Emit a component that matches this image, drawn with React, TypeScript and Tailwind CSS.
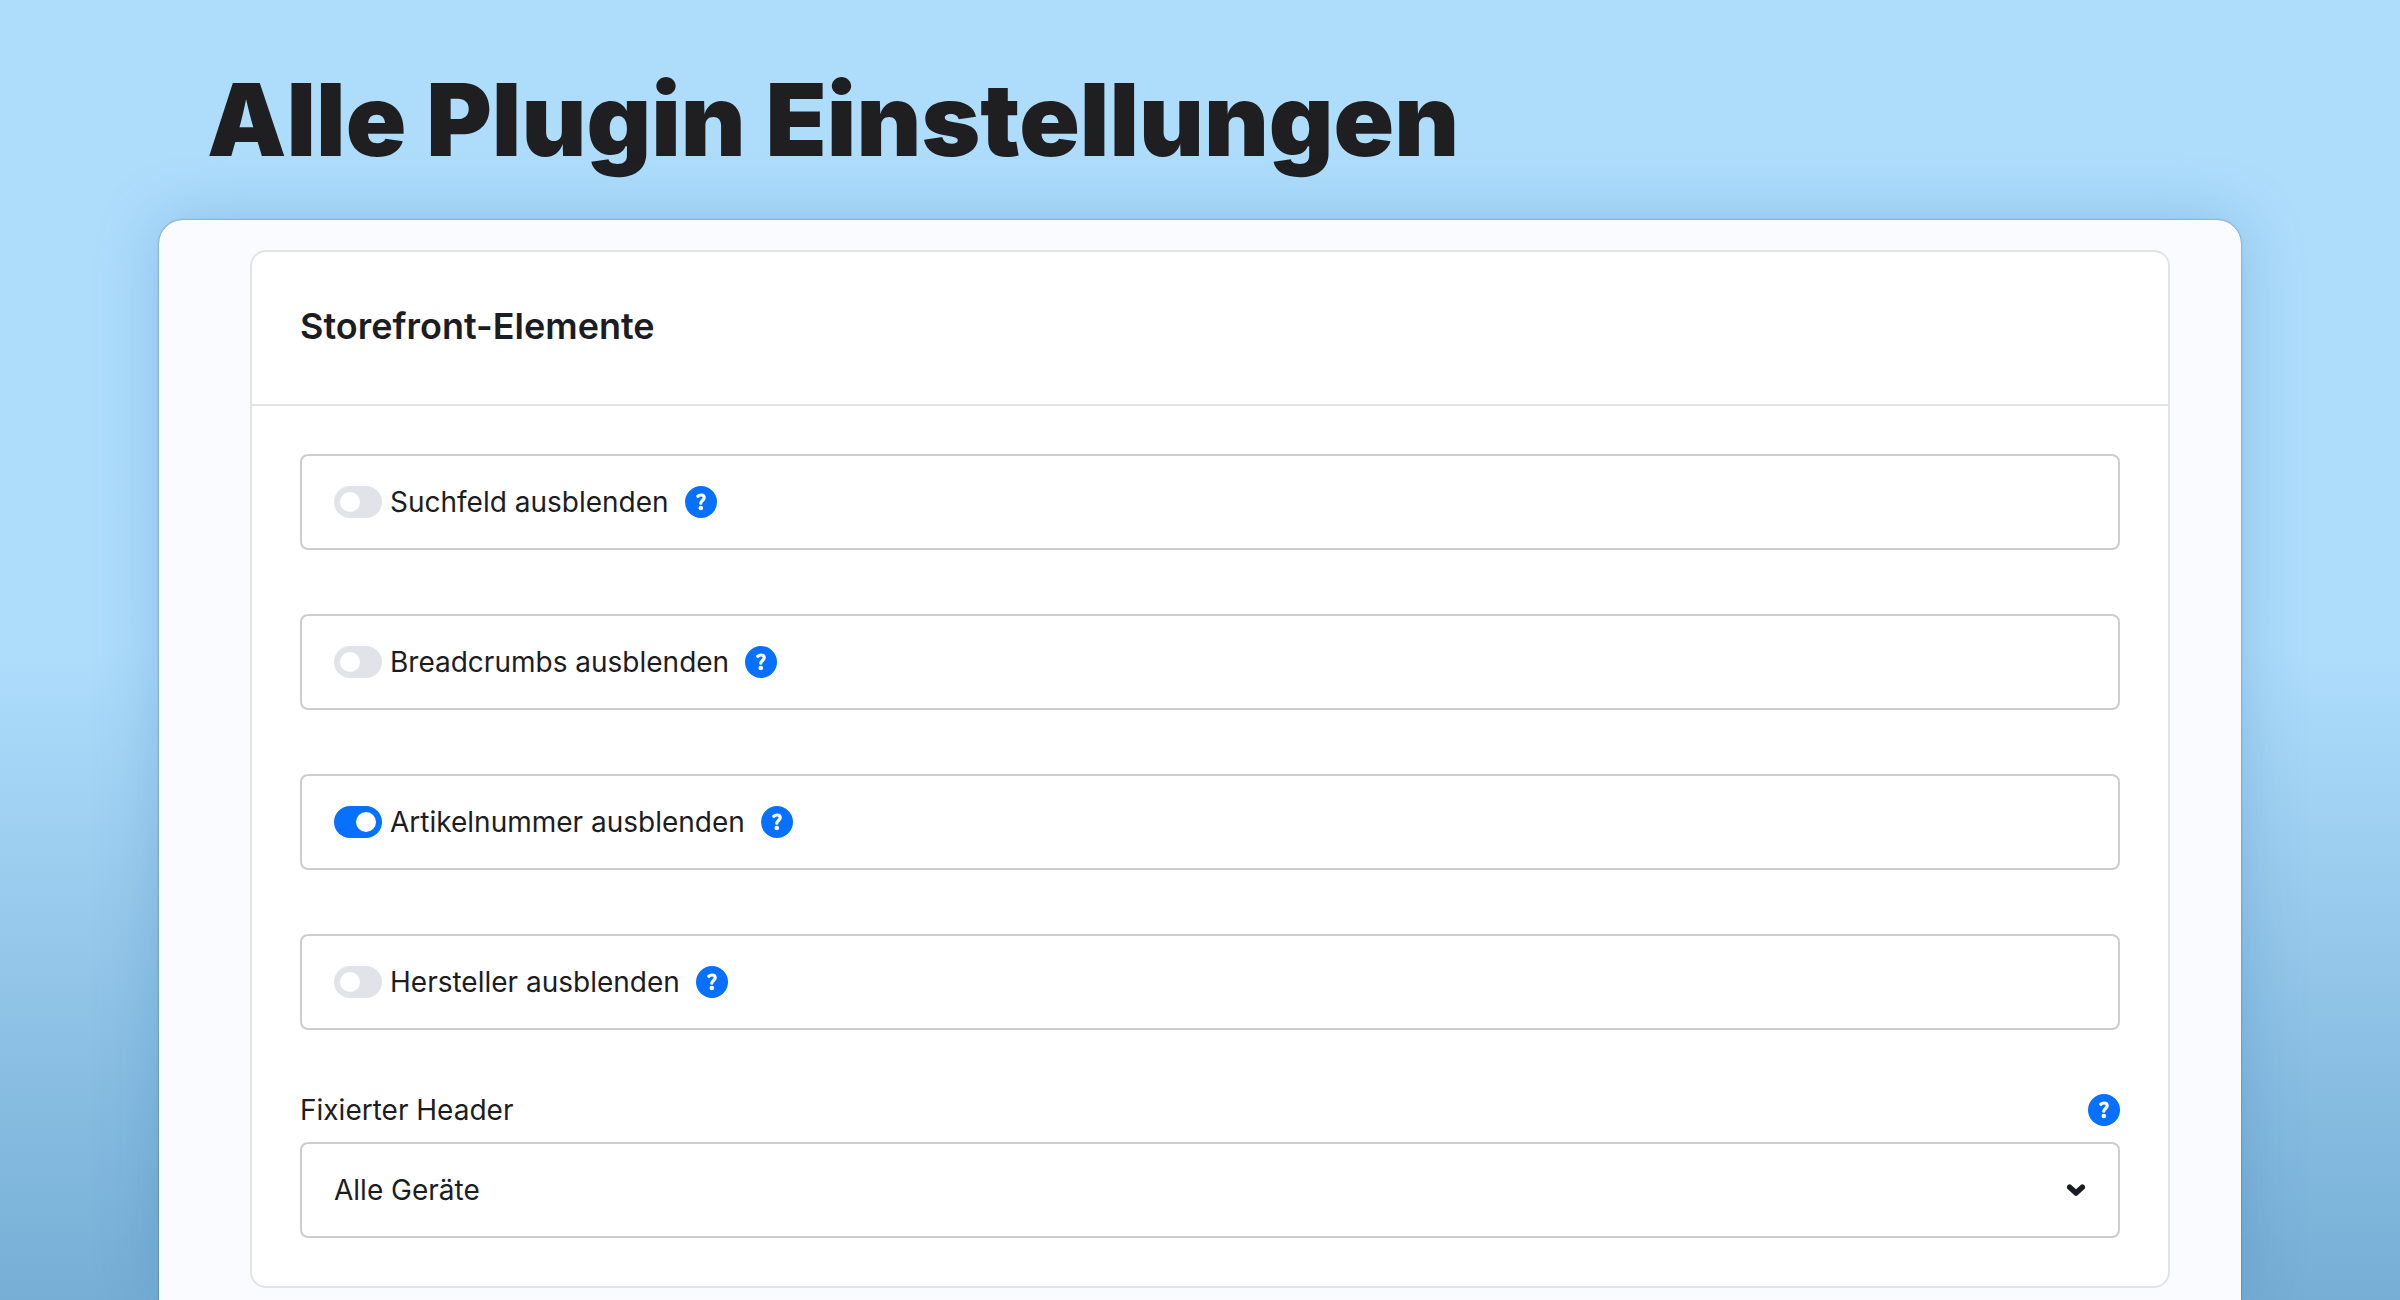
import { useState } from "react";

const optionen = [
  { id: "suchfeld", label: "Suchfeld ausblenden", aktiv: false },
  { id: "breadcrumbs", label: "Breadcrumbs ausblenden", aktiv: false },
  { id: "artikelnummer", label: "Artikelnummer ausblenden", aktiv: true },
  { id: "hersteller", label: "Hersteller ausblenden", aktiv: false },
];

function HelpButton({ label }: { label: string }) {
  return (
    <button type="button" aria-label={`Hilfe: ${label}`} className="size-8 shrink-0 rounded-full">
      <svg viewBox="0 0 32 32" className="size-8">
        <circle cx="16" cy="16" r="16" fill="#0870ff" />
        <path
          d="M12.8 10.2c.9-.8 2-1.2 3.2-1.2 2 0 3.2 1.1 3.2 2.8 0 2.5-3.4 2.8-3.4 5.4"
          fill="none"
          stroke="#fff"
          strokeWidth="3.2"
          strokeLinecap="round"
          strokeLinejoin="round"
        />
        <circle cx="15.8" cy="22" r="2.3" fill="#fff" />
      </svg>
    </button>
  );
}

function SwitchField({ id, label, aktiv }: { id: string; label: string; aktiv: boolean }) {
  const [checked, setChecked] = useState(aktiv);

  return (
    <div className="flex h-24 items-center rounded-lg border-2 border-[#cdcdcf] px-8">
      <input
        type="checkbox"
        role="switch"
        id={id}
        checked={checked}
        onChange={(e) => setChecked(e.target.checked)}
        className="h-8 w-12 shrink-0 appearance-none rounded-full bg-[#e2e3e9] p-1.5 before:block before:size-5 before:rounded-full before:bg-white checked:bg-[#0870ff] checked:before:ml-4"
      />
      <label htmlFor={id} className="mr-4 ml-2">
        {label}
      </label>
      <HelpButton label={label} />
    </div>
  );
}

function App() {
  const [header, setHeader] = useState("alle");

  return (
    <div className="flex min-h-screen flex-col bg-linear-to-b from-[#aeddfc] from-50% to-[#76aed5] px-[159px] font-['Inter',sans-serif] text-[#1c1d22]">
      <h1 className="flex h-[220px] items-center px-12 pt-5 text-[100px] leading-none font-black text-[#1f1f21]">
        Alle Plugin Einstellungen
      </h1>

      <main className="flex-1 rounded-t-3xl bg-[#fafbff] pt-[30px] pr-[71px] pb-3 pl-[91px] shadow-[0_0_64px_rgba(30,100,160,0.25),0_0_2px_rgba(20,50,90,0.6)]">
        <section className="rounded-2xl border-2 border-[#e2e3e7] bg-white">
          <h2 className="flex h-[154px] items-center border-b-2 border-[#e2e3e7] px-12 pb-1 text-4xl font-semibold">
            Storefront-Elemente
          </h2>

          <div className="p-12 text-[28px] leading-9">
            <div className="flex flex-col gap-16">
              {optionen.map((option) => (
                <SwitchField key={option.id} {...option} />
              ))}
            </div>

            <div className="mt-[62px] mb-3.5 flex items-center justify-between">
              <label htmlFor="header">Fixierter Header</label>
              <HelpButton label="Fixierter Header" />
            </div>
            <div className="relative">
              <select
                id="header"
                value={header}
                onChange={(e) => setHeader(e.target.value)}
                className="h-24 w-full appearance-none rounded-lg border-2 border-[#cdcdcf] bg-white px-8"
              >
                <option value="alle">Alle Geräte</option>
                <option value="desktop">Desktop</option>
                <option value="mobil">Mobil</option>
              </select>
              <svg
                viewBox="0 0 20 14"
                className="pointer-events-none absolute top-[41px] right-[34px] h-3.5 w-5"
                fill="none"
                stroke="#1c1d22"
                strokeWidth="5.5"
                strokeLinecap="round"
                strokeLinejoin="round"
              >
                <path d="M3.7 4.2 10 10l6.3-5.8" />
              </svg>
            </div>
          </div>
        </section>
      </main>
    </div>
  );
}

export default App;
